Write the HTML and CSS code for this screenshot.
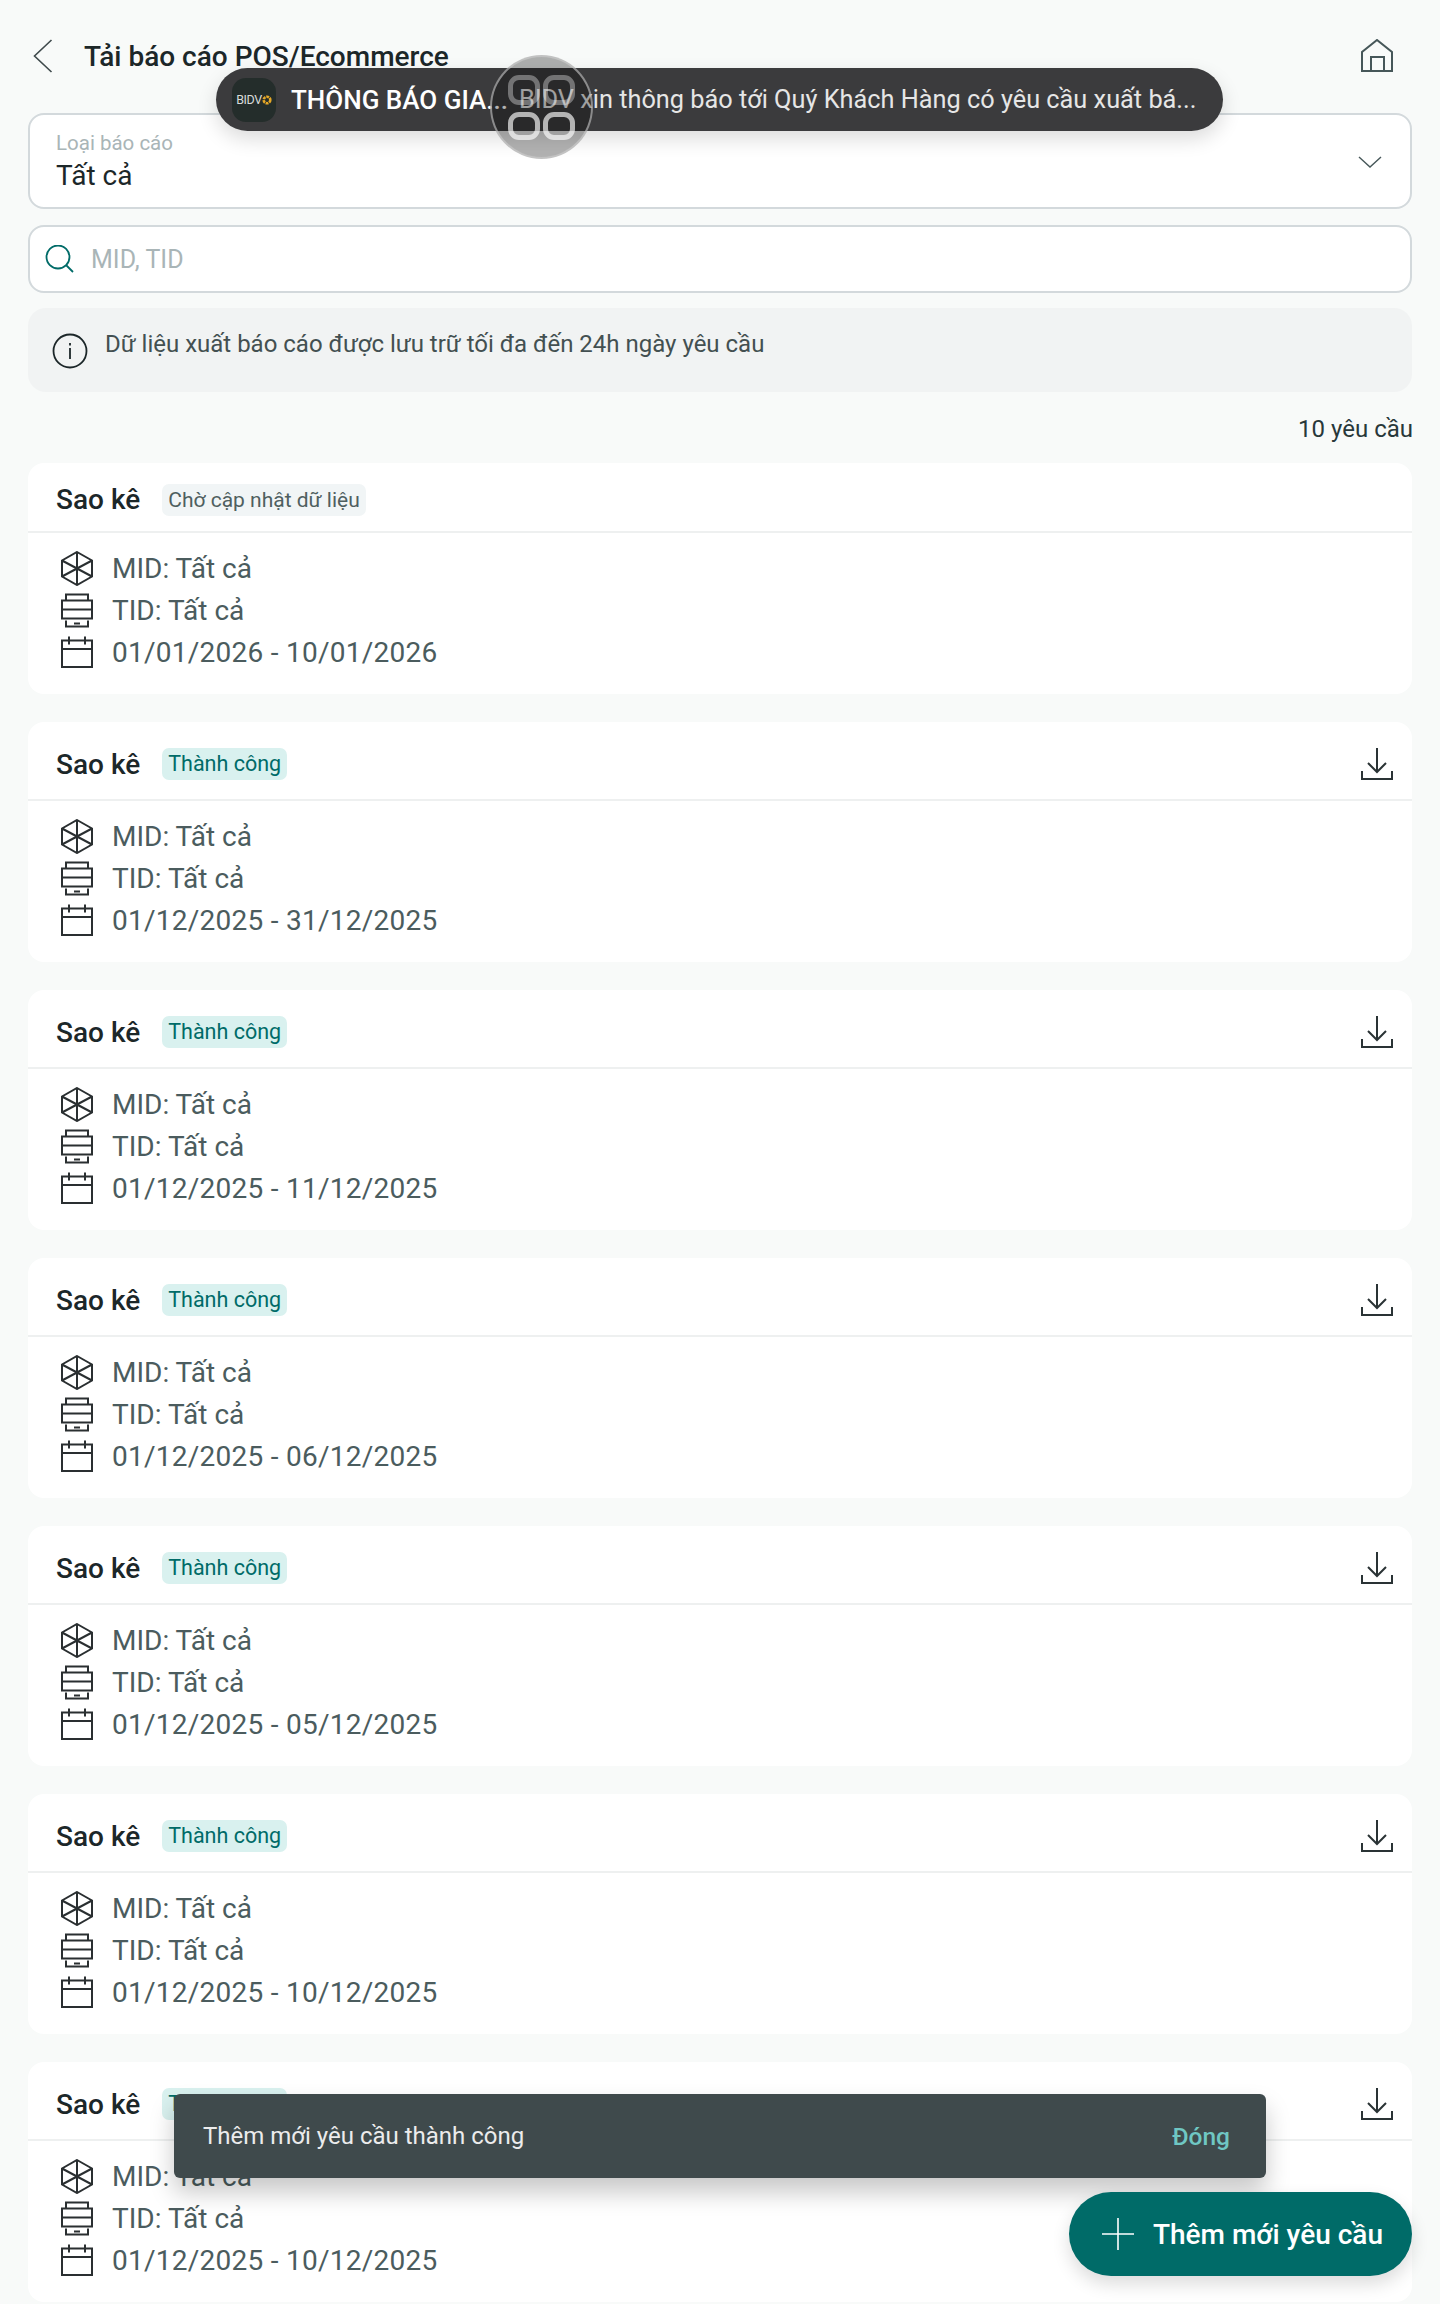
FILE: index.html
```html
<!DOCTYPE html>
<html lang="en">

<head>
    <meta charset="UTF-8">
    <title>Tải báo cáo POS/Ecommerce</title>
    <link rel="stylesheet" href="styles.css">
</head>

<body>
    <svg class="defs" width="0" height="0">
        <symbol id="i-cube" viewBox="0 0 32 35">
            <path d="M16 1L31 9.5V25.5L16 34L1 25.5V9.5ZM16 1V34M1 9.5L31 25.5M31 9.5L1 25.5" />
        </symbol>
        <symbol id="i-pos" viewBox="0 0 32 34">
            <path d="M5 7V1H27V7M1 7H31V25H1ZM1 16H31M5 27V33H27V27M13 30H19" />
        </symbol>
        <symbol id="i-cal" viewBox="0 0 32 32">
            <path d="M1 4H31V30.5H1ZM1 12.5H31M8 0V8M24 0V8" />
        </symbol>
        <symbol id="i-down" viewBox="0 0 32 32">
            <path d="M16 0V24M7 15L16 24L25 15M1 23V31H31V23" />
        </symbol>
    </svg>

    <div id="page">
        <div class="topbar">
            <svg class="back" width="20" height="34" viewBox="0 0 20 34">
                <path d="M18.500 1L1.500 17L18.500 33" />
            </svg>
            <h1>Tải báo cáo POS/Ecommerce</h1>
            <svg class="home" width="32" height="33" viewBox="0 0 32 33">
                <path d="M1 32V13L16 1L31 13V32ZM10 32V18H23V32" />
            </svg>
        </div>

        <div class="select-box">
            <div>
                <div class="select-label">Loại báo cáo</div>
                <div class="select-value">Tất cả</div>
            </div>
            <svg class="chev" width="24" height="12" viewBox="0 0 24 12">
                <path d="M1 1L12 11L23 1" />
            </svg>
        </div>

        <div class="search-box">
            <svg class="lens" width="30" height="28" viewBox="0 0 30 28">
                <circle cx="13" cy="12" r="11.500" />
                <path d="M21 20L28 27" />
            </svg>
            <span>MID, TID</span>
        </div>

        <div class="info-box">
            <svg class="info-icon" width="36" height="36" viewBox="0 0 36 36">
                <circle cx="18" cy="18" r="16.500" />
                <path d="M18 15V26M18 10V12.500" />
            </svg>
            <span>Dữ liệu xuất báo cáo được lưu trữ tối đa đến 24h ngày yêu cầu</span>
        </div>

        <div class="count">10 yêu cầu</div>

        <div class="card card-wait">
            <div class="card-head">
                <span class="card-title">Sao kê</span>
                <span class="badge badge-wait">Chờ cập nhật dữ liệu</span>
            </div>
            <div class="card-body">
                <div class="row"><svg class="ico"><use href="#i-cube" /></svg>MID: Tất cả</div>
                <div class="row"><svg class="ico"><use href="#i-pos" /></svg>TID: Tất cả</div>
                <div class="row row-date"><svg class="ico"><use href="#i-cal" /></svg>01/01/2026 - 10/01/2026</div>
            </div>
        </div>

        <div class="card">
            <div class="card-head">
                <span class="card-title">Sao kê</span>
                <span class="badge">Thành công</span>
                <svg class="dl"><use href="#i-down" /></svg>
            </div>
            <div class="card-body">
                <div class="row"><svg class="ico"><use href="#i-cube" /></svg>MID: Tất cả</div>
                <div class="row"><svg class="ico"><use href="#i-pos" /></svg>TID: Tất cả</div>
                <div class="row row-date"><svg class="ico"><use href="#i-cal" /></svg>01/12/2025 - 31/12/2025</div>
            </div>
        </div>

        <div class="card">
            <div class="card-head">
                <span class="card-title">Sao kê</span>
                <span class="badge">Thành công</span>
                <svg class="dl"><use href="#i-down" /></svg>
            </div>
            <div class="card-body">
                <div class="row"><svg class="ico"><use href="#i-cube" /></svg>MID: Tất cả</div>
                <div class="row"><svg class="ico"><use href="#i-pos" /></svg>TID: Tất cả</div>
                <div class="row row-date"><svg class="ico"><use href="#i-cal" /></svg>01/12/2025 - 11/12/2025</div>
            </div>
        </div>

        <div class="card">
            <div class="card-head">
                <span class="card-title">Sao kê</span>
                <span class="badge">Thành công</span>
                <svg class="dl"><use href="#i-down" /></svg>
            </div>
            <div class="card-body">
                <div class="row"><svg class="ico"><use href="#i-cube" /></svg>MID: Tất cả</div>
                <div class="row"><svg class="ico"><use href="#i-pos" /></svg>TID: Tất cả</div>
                <div class="row row-date"><svg class="ico"><use href="#i-cal" /></svg>01/12/2025 - 06/12/2025</div>
            </div>
        </div>

        <div class="card">
            <div class="card-head">
                <span class="card-title">Sao kê</span>
                <span class="badge">Thành công</span>
                <svg class="dl"><use href="#i-down" /></svg>
            </div>
            <div class="card-body">
                <div class="row"><svg class="ico"><use href="#i-cube" /></svg>MID: Tất cả</div>
                <div class="row"><svg class="ico"><use href="#i-pos" /></svg>TID: Tất cả</div>
                <div class="row row-date"><svg class="ico"><use href="#i-cal" /></svg>01/12/2025 - 05/12/2025</div>
            </div>
        </div>

        <div class="card">
            <div class="card-head">
                <span class="card-title">Sao kê</span>
                <span class="badge">Thành công</span>
                <svg class="dl"><use href="#i-down" /></svg>
            </div>
            <div class="card-body">
                <div class="row"><svg class="ico"><use href="#i-cube" /></svg>MID: Tất cả</div>
                <div class="row"><svg class="ico"><use href="#i-pos" /></svg>TID: Tất cả</div>
                <div class="row row-date"><svg class="ico"><use href="#i-cal" /></svg>01/12/2025 - 10/12/2025</div>
            </div>
        </div>

        <div class="card">
            <div class="card-head">
                <span class="card-title">Sao kê</span>
                <span class="badge">Thành công</span>
                <svg class="dl"><use href="#i-down" /></svg>
            </div>
            <div class="card-body">
                <div class="row"><svg class="ico"><use href="#i-cube" /></svg>MID: Tất cả</div>
                <div class="row"><svg class="ico"><use href="#i-pos" /></svg>TID: Tất cả</div>
                <div class="row row-date"><svg class="ico"><use href="#i-cal" /></svg>01/12/2025 - 10/12/2025</div>
            </div>
        </div>
    </div>

    <div class="push">
        <div class="push-logo">
            <span>BIDV</span>
            <svg width="10" height="10" viewBox="0 0 10 10">
                <circle cx="5" cy="5" r="3.300" />
            </svg>
        </div>
        <span class="push-title">THÔNG BÁO GIA...</span>
        <span class="push-text">BIDV xin thông báo tới Quý Khách Hàng có yêu cầu xuất bá...</span>
    </div>

    <div class="assist">
        <i></i><i></i><i></i><i></i>
    </div>

    <div class="toast">
        <span>Thêm mới yêu cầu thành công</span>
        <span class="toast-close">Đóng</span>
    </div>

    <div class="fab">
        <svg width="32" height="32" viewBox="0 0 32 32">
            <path d="M16 0V32M0 16H32" />
        </svg>
        <span>Thêm mới yêu cầu</span>
    </div>
</body>

</html>
```
FILE: styles.css
```css
* {
    box-sizing: border-box;
}

html,
body {
    margin: 0;
    padding: 0;
    height: 2304px;
    overflow: hidden;
    background: #f8faf9;
    font-family: Roboto, "Noto Sans", sans-serif;
    color: #1c2729;
}

.defs {
    position: absolute;
}

#page {
    padding: 0 28px;
}

svg {
    fill: none;
    flex: none;
}

.topbar {
    display: flex;
    align-items: center;
    height: 113px;
    padding: 0 19px 2px 5px;
}

.back path {
    stroke: #3f4a4c;
    stroke-width: 1.6;
}

.topbar h1 {
    margin: 2px 0 0 31px;
    font-size: 28px;
    line-height: 34px;
    font-weight: 500;
    flex: 1;
}

.home path {
    stroke: #465759;
    stroke-width: 2;
}

.select-box {
    display: flex;
    align-items: center;
    justify-content: space-between;
    height: 96px;
    padding: 0 28px 0 26px;
    background: #fff;
    border: 2px solid #d3d9dc;
    border-radius: 16px;
}

.select-label {
    font-size: 20.500px;
    line-height: 28px;
    color: #a9b5b7;
}

.select-value {
    font-size: 28px;
    line-height: 36px;
    padding-top: 1px;
}

.chev {
    margin-top: 1px;
}

.chev path {
    stroke: #465759;
    stroke-width: 1.4;
}

.search-box {
    display: flex;
    align-items: center;
    gap: 16px;
    height: 68px;
    margin-top: 16px;
    padding: 0 0 0 15px;
    background: #fff;
    border: 2px solid #d3d9dc;
    border-radius: 16px;
    font-size: 25px;
    color: #a9b5b7;
}

.lens {
    stroke: #006b68;
    stroke-width: 1.8;
}

.info-box {
    display: flex;
    align-items: flex-start;
    gap: 17px;
    height: 84px;
    margin-top: 15px;
    padding: 20px 24px 0;
    background: #f1f3f3;
    border-radius: 18px;
    font-size: 24px;
    line-height: 32px;
    color: #435051;
}

.info-icon {
    margin-top: 5px;
    stroke: #1c2729;
    stroke-width: 1.8;
}

.count {
    margin: 22px -1px 0 0;
    font-size: 24px;
    line-height: 30px;
    text-align: right;
    height: 49px;
    color: #28383a;
}

.card {
    margin-bottom: 28px;
    background: #fff;
    border-radius: 16px;
    overflow: hidden;
}

.card-head {
    display: flex;
    align-items: center;
    height: 79px;
    padding: 7px 19px 0 28px;
    border-bottom: 2px solid #eef0f0;
}

.card-wait .card-head {
    height: 70px;
    padding-top: 5px;
}

.card-title {
    font-size: 28px;
    font-weight: 500;
    margin-right: 22px;
}

.badge {
    padding: 0 6px;
    height: 32px;
    line-height: 32px;
    font-size: 21.500px;
    border-radius: 7px;
    background: #d9f1ef;
    color: #006b68;
}

.badge-wait {
    font-size: 21px;
    background: #f1f5f6;
    color: #4f5f60;
}

.dl {
    width: 32px;
    height: 32px;
    margin-left: auto;
    stroke: #2a3335;
    stroke-width: 2;
}

.card-body {
    padding: 14px 0 21px 33px;
}

.row {
    display: flex;
    align-items: center;
    gap: 19px;
    height: 42px;
    font-size: 28px;
    color: #4b5c5e;
}

.row-date {
    letter-spacing: 0.26px;
}

.ico {
    width: 32px;
    height: 35px;
    stroke: #2a2f31;
    stroke-width: 2;
}

/* over the content */
.push {
    position: absolute;
    left: 216px;
    top: 68px;
    width: 1007px;
    height: 63px;
    display: flex;
    align-items: center;
    padding-left: 16px;
    background: #3b3b3d;
    border-radius: 32px;
    box-shadow: 0 8px 20px rgba(0, 0, 0, 0.14);
    font-size: 25.300px;
    white-space: nowrap;
}

.push-logo {
    display: flex;
    align-items: center;
    justify-content: center;
    gap: 0;
    width: 44px;
    height: 44px;
    border-radius: 14px;
    background: #242d2b;
    color: #d8dbda;
    font-size: 12.500px;
    letter-spacing: -0.4px;
    margin-right: 15px;
}

.push-logo circle {
    stroke: #e6a826;
    stroke-width: 2.600;
    stroke-dasharray: 2.800 0.800;
}

.push-title {
    color: #fff;
    font-size: 26px;
    font-weight: 500;
    margin-right: 11px;
}

.push-text {
    color: #e6e6e6;
}

.assist {
    position: absolute;
    left: 490px;
    top: 55px;
    width: 103px;
    height: 104px;
    display: grid;
    grid-template-columns: 32px 32px;
    grid-template-rows: 30px 28px;
    gap: 7px 3px;
    place-content: center;
    border-radius: 50%;
    border: 2px solid rgba(205, 205, 205, 0.6);
    background: rgba(0, 0, 0, 0.3);
}

.assist i {
    border: 5px solid rgba(255, 255, 255, 0.65);
    border-radius: 11px;
}

.assist i:nth-child(-n+2) {
    border-color: rgba(255, 255, 255, 0.35);
}

.toast {
    position: absolute;
    left: 174px;
    top: 2094px;
    width: 1092px;
    height: 84px;
    display: flex;
    align-items: center;
    justify-content: space-between;
    padding: 0 36px 0 29px;
    background: #3f4a4c;
    border-radius: 6px;
    box-shadow: 0 14px 24px rgba(0, 0, 0, 0.22);
    font-size: 24px;
    color: #ececec;
}

.toast-close {
    font-size: 24.500px;
    font-weight: 500;
    color: #6fc7c3;
}

.fab {
    position: absolute;
    left: 1069px;
    top: 2192px;
    width: 343px;
    height: 84px;
    display: flex;
    align-items: center;
    gap: 19px;
    padding-left: 33px;
    background: #006b68;
    border-radius: 42px;
    box-shadow: 0 8px 18px rgba(0, 0, 0, 0.14);
    font-size: 28px;
    font-weight: 500;
    color: #fff;
}

.fab path {
    stroke: #fff;
    stroke-width: 1.6;
}
```
